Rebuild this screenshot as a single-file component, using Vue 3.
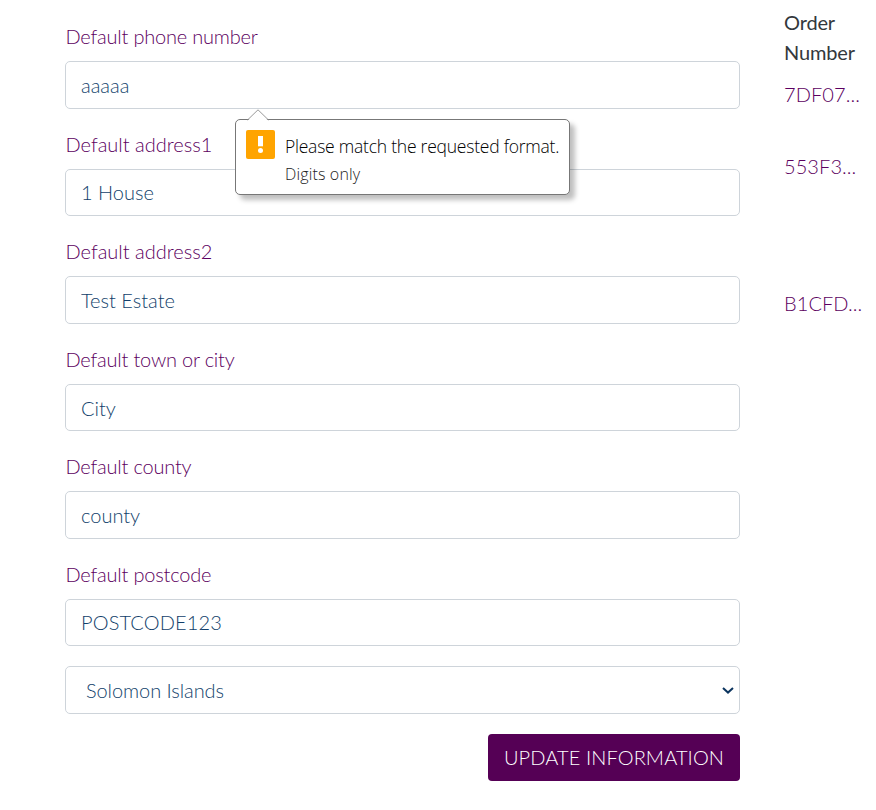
<script setup>
import { ref } from 'vue'

const fields = ref([
  { id: 'phone', label: 'Default phone number', value: 'aaaaa' },
  { id: 'address1', label: 'Default address1', value: '1 House' },
  { id: 'address2', label: 'Default address2', value: 'Test Estate' },
  { id: 'town', label: 'Default town or city', value: 'City' },
  { id: 'county', label: 'Default county', value: 'county' },
  { id: 'postcode', label: 'Default postcode', value: 'POSTCODE123' },
])
const orders = ['7DF07...', '553F3...', 'B1CFD...']
</script>

<template>
  <main class="page">
    <form class="form" @submit.prevent>
      <div v-for="f in fields" :key="f.id" class="group" :class="f.id">
        <label :for="f.id">{{ f.label }}</label>
        <input :id="f.id" v-model="f.value" class="control" type="text" />
        <div v-if="f.id === 'phone'" class="bubble" role="alert">
          <svg class="arrow" width="22" height="12" viewBox="0 0 22 12">
            <path d="M0.5 12 L11 0.8 L21.5 12Z" fill="#fff" />
            <path d="M0.5 11 L11 0.8 L21.5 11" fill="none" stroke="#999" />
          </svg>
          <svg class="warn" width="29" height="29" viewBox="0 0 29 29">
            <rect width="29" height="29" rx="2" fill="#ffa400" />
            <path d="M12 6h5v10.3h-5z" fill="#fff" />
            <circle cx="14.5" cy="20.4" r="2.5" fill="#fff" />
          </svg>
          <div class="message">
            <div class="title">Please match the requested format.</div>
            <div class="hint">Digits only</div>
          </div>
        </div>
      </div>
      <div class="control select">
        <span>Solomon Islands</span>
        <svg width="12" height="8" viewBox="0 0 12 8">
          <path d="M1 2 L6 6.6 L11 2" fill="none" stroke="#0c355f" stroke-width="2" />
        </svg>
      </div>
      <button class="submit" type="submit">UPDATE INFORMATION</button>
    </form>
    <aside class="orders">
      <div class="heading">Order<br />Number</div>
      <a v-for="o in orders" :key="o" class="order">{{ o }}</a>
    </aside>
  </main>
</template>

<style>
body {
  background: #fff;
  overflow: hidden;
}
</style>

<style scoped>
.page {
  box-sizing: border-box;
  display: flex;
  height: 810px;
  padding-left: 65px;
  font: 300 20px/30px Lato, sans-serif;
  color: #5c0060;
}
.form {
  display: flex;
  flex-direction: column;
  width: 675px;
  padding-top: 21.25px;
}
.group {
  position: relative;
  display: flex;
  flex-direction: column;
  margin-bottom: 20px;
}
label {
  margin-bottom: 10px;
  padding-left: 0.5px;
}
.phone label,
.town label,
.county label,
.postcode label {
  letter-spacing: -0.2px;
}
.control {
  box-sizing: border-box;
  width: 100%;
  height: 47.5px;
  padding: 7.5px 15px;
  border: 1px solid #ced4da;
  border-radius: 5px;
  background: #fff;
  color: #123f6b;
  font: inherit;
  outline: none;
}
.postcode .control {
  letter-spacing: 0.12px;
}
.address1 .control,
.postcode .control {
  padding-top: 6.5px;
  padding-bottom: 8.5px;
}
.select {
  display: flex;
  align-items: center;
  justify-content: space-between;
  padding: 0 5px 0 20px;
  letter-spacing: -0.07px;
}
.submit {
  align-self: flex-end;
  width: 252px;
  height: 47px;
  margin-top: 20px;
  padding: 0;
  border: 0;
  border-radius: 4px;
  background: #550055;
  color: #fff;
  font: inherit;
  letter-spacing: 0.1px;
  white-space: nowrap;
}
.bubble {
  position: absolute;
  z-index: 1;
  top: 98px;
  left: 170px;
  box-sizing: border-box;
  display: flex;
  width: 335px;
  height: 76px;
  padding: 10px;
  border: 1px solid #777;
  border-radius: 5px;
  background: #fff;
  box-shadow: 5px 5px 5px rgba(0, 0, 0, 0.25);
  font-family: "Open Sans", "Noto Sans", sans-serif;
  white-space: nowrap;
}
.arrow {
  position: absolute;
  top: -11px;
  left: 11px;
}
.warn {
  flex: none;
}
.message {
  margin-left: 10px;
}
.title {
  margin-top: 2px;
  color: #000;
  font-size: 17.5px;
  font-weight: 300;
  letter-spacing: -0.23px;
  line-height: 28px;
}
.hint {
  color: #222;
  font-size: 16px;
  font-weight: 300;
  letter-spacing: 0.15px;
  line-height: 28px;
}
.orders {
  display: flex;
  flex-direction: column;
  padding: 7px 0 0 44px;
}
.heading {
  margin-bottom: 12px;
  color: #33383c;
  font-weight: 400;
  letter-spacing: -0.15px;
}
.order {
  height: 72px;
  letter-spacing: 0.08px;
}
.order:nth-of-type(2) {
  height: 137px;
}
</style>
